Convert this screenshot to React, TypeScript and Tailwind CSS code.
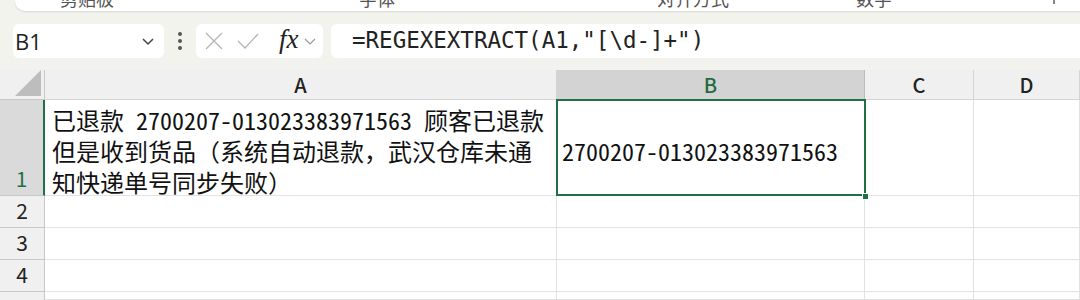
import React from "react";

const cjk = '"Noto Sans Mono CJK SC", "Noto Sans CJK SC", sans-serif';

const Launcher = () => (
  <svg width="12" height="12" viewBox="0 0 12 12" className="block">
    <path d="M2 1v3h7V1" fill="none" stroke="#777" strokeWidth="1.2" />
  </svg>
);

const RibbonLabel = ({ text, className }: { text: string; className: string }) => (
  <span className={`text-[18px] leading-[18px] text-[#555] -mt-[11px] ${className}`} style={{ fontFamily: cjk }}>
    {text}
  </span>
);

const Ribbon = () => (
  <div className="h-[12px] pl-[15px]">
    <div className="h-[11px] bg-white rounded-bl-[10px] shadow-[0_1px_2px_rgba(0,0,0,0.12)] overflow-hidden flex items-start">
      <RibbonLabel text="剪贴板" className="ml-[45px]" />
      <div className="ml-[45px] -mt-[6px]"><Launcher /></div>
      <RibbonLabel text="字体" className="ml-[188px]" />
      <div className="ml-[193px] -mt-[6px]"><Launcher /></div>
      <RibbonLabel text="对齐方式" className="ml-[57px]" />
      <div className="ml-[68px] -mt-[6px]"><Launcher /></div>
      <RibbonLabel text="数字" className="ml-[47px]" />
      <div className="ml-[64px] -mt-[6px]"><Launcher /></div>
      <div className="ml-[85px] -mt-[6px] w-[2px] h-[10px] bg-[#888]" />
    </div>
  </div>
);

const FormulaBar = () => (
  <div className="flex items-center h-[34px] mt-[12px] pl-[13px]">
    <div className="w-[151px] h-[34px] bg-white rounded-[6px] flex items-center justify-between pl-[2px] pr-[8px]">
      <span className="text-[22px] text-[#222]" style={{ fontFamily: '"Open Sans", sans-serif' }}>B1</span>
      <svg width="16" height="16" viewBox="0 0 16 16">
        <path d="M3 6l5 5 5-5" fill="none" stroke="#444" strokeWidth="1.5" />
      </svg>
    </div>
    <div className="w-[32px] flex flex-col items-center gap-[3px]">
      <span className="w-[4px] h-[4px] rounded-full bg-[#555]" />
      <span className="w-[4px] h-[4px] rounded-full bg-[#555]" />
      <span className="w-[4px] h-[4px] rounded-full bg-[#555]" />
    </div>
    <div className="w-[127px] h-[34px] bg-white rounded-[6px] flex items-center pl-[9px]">
      <svg width="18" height="18" viewBox="0 0 18 18">
        <path d="M1 1l16 16M17 1L1 17" stroke="#b4b4b4" strokeWidth="1.3" />
      </svg>
      <svg width="22" height="16" viewBox="0 0 22 16" className="ml-[14px]">
        <path d="M1 8l7 7L21 1" fill="none" stroke="#b4b4b4" strokeWidth="1.3" />
      </svg>
      <span className="ml-[20px] text-[27px] italic leading-none text-[#222] -mt-[4px]" style={{ fontFamily: '"Liberation Serif", serif' }}>
        fx
      </span>
      <svg width="12" height="10" viewBox="0 0 12 10" className="ml-[5px]">
        <path d="M1 3l5 5 5-5" fill="none" stroke="#999" strokeWidth="1.2" />
      </svg>
    </div>
    <div className="ml-[8px] flex-1 h-[34px] bg-white rounded-l-[6px] flex items-center pl-[21px]">
      <span className="text-[22.5px] text-[#222]" style={{ fontFamily: '"DejaVu Sans Mono", monospace' }}>
        =REGEXEXTRACT(A1,"[\d-]+")
      </span>
    </div>
  </div>
);

const hdr = "bg-[#f0f0f0] border-r border-b border-[#d4d4d4] flex items-center justify-center text-[20px] text-[#222] font-medium";
const rowHdr = "bg-[#f0f0f0] border-r border-b border-[#c8c8c8] flex items-end justify-center pb-[1px] text-[21px] text-[#222]";
const cell = "bg-white border-r border-b border-[#e2e2e2]";

const Grid = () => (
  <div
    className="grid mt-[12px] grid-cols-[45px_512px_308px_109px_106px] grid-rows-[30px_96px_32px_32px_32px_8px]"
    style={{ fontFamily: '"Noto Sans CJK SC", sans-serif' }}
  >
    <div className="bg-[#f0f0f0] border-r border-b border-[#c8c8c8] flex items-end justify-end p-[3px]">
      <svg width="26" height="26" viewBox="0 0 26 26">
        <path d="M26 0L26 26L0 26Z" fill="#bdbdbd" />
      </svg>
    </div>
    <div className={hdr}>A</div>
    <div className="bg-[#d3d3d3] border-r border-b border-[#bdbdbd] flex items-center justify-center text-[20px] text-[#1e6b41] font-medium">B</div>
    <div className={hdr}>C</div>
    <div className={hdr}>D</div>

    <div className="bg-[#dadada] border-r-2 border-b border-r-[#1e7145] border-b-[#c8c8c8] flex items-end justify-center pb-[1px] text-[21px] text-[#1e7145]">1</div>
    <div className={`${cell} pl-[7px] pr-[10px] pt-[4px] text-[24px] leading-[31px] text-[#111]`} style={{ fontFamily: cjk }}>
      已退款 2700207-013023383971563 顾客已退款但是收到货品（系统自动退款，武汉仓库未通知快递单号同步失败）
    </div>
    <div className="relative bg-white">
      <div className="absolute -left-[1px] -top-[1px] w-[310px] h-[97px] border-2 border-[#1e7145] flex items-center pl-[4px] pt-[6px] text-[24px] text-[#111]" style={{ fontFamily: cjk }}>
        2700207-013023383971563
      </div>
      <div className="absolute -right-[4px] -bottom-[4px] w-[7px] h-[7px] bg-[#1e7145] border border-white" />
    </div>
    <div className={cell} />
    <div className={cell} />

    {[2, 3, 4].map((n) => (
      <React.Fragment key={n}>
        <div className={rowHdr}>{n}</div>
        <div className={cell} />
        <div className={cell} />
        <div className={cell} />
        <div className={cell} />
      </React.Fragment>
    ))}
    <div className="bg-[#f0f0f0] border-r border-[#c8c8c8]" />
    <div className={cell} />
    <div className={cell} />
    <div className={cell} />
    <div className={cell} />
  </div>
);

export default function App() {
  return (
    <div className="w-[1080px] h-[300px] overflow-hidden bg-[#f3f3ee]">
      <Ribbon />
      <FormulaBar />
      <Grid />
    </div>
  );
}
